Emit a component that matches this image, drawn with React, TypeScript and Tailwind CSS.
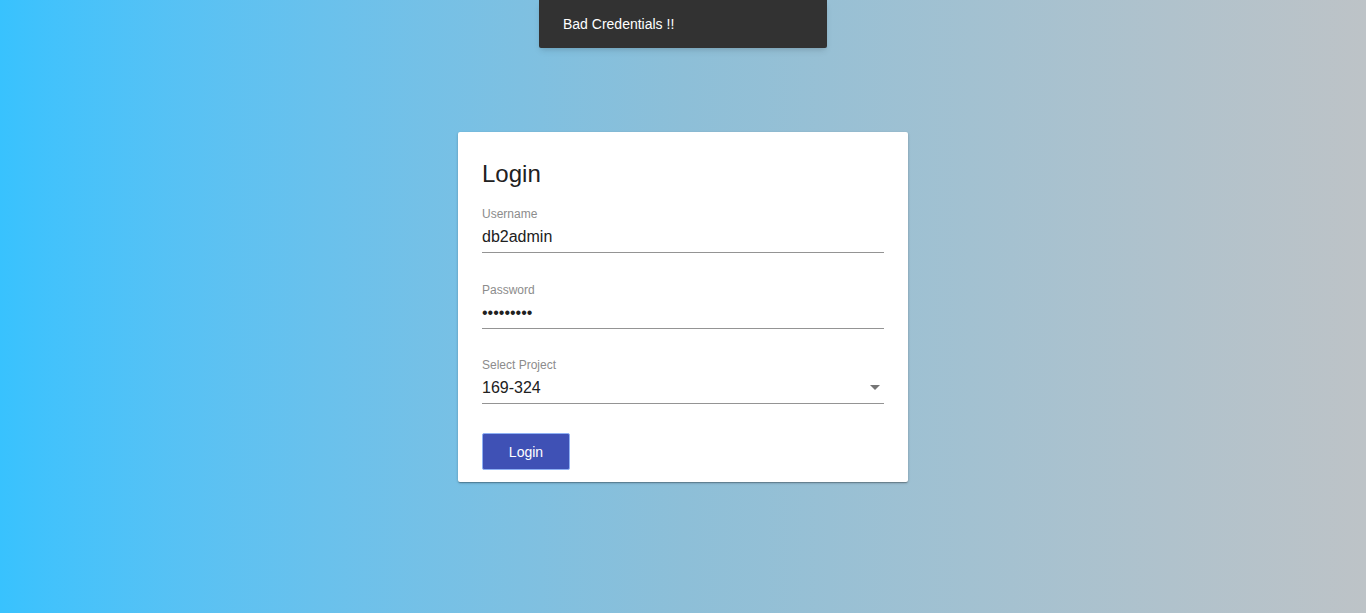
import React from 'react';

const FONT = { fontFamily: '"Liberation Sans", Arial, sans-serif' };

function Field({ label, value, select }: { label: string; value: string; select?: boolean }) {
  return (
    <div className="flex flex-col">
      <label className="text-[12px] leading-4 text-[#8c8c8c]">{label}</label>
      <div className="flex items-center justify-between pt-[5px] pb-[6px] border-b border-[#949494]">
        <span className="text-[16px] leading-[19px] text-[#212121]">{value}</span>
        {select && (
          <svg width="10" height="5" viewBox="0 0 10 5" className="mr-[4px]">
            <path d="M0 0h10L5 5z" fill="#757575" />
          </svg>
        )}
      </div>
    </div>
  );
}

export default function App() {
  return (
    <div
      className="relative w-full h-[613px] overflow-hidden bg-gradient-to-r from-[#38c2fe] via-[#8dbfd8] to-[#bdc3c7]"
      style={FONT}
    >
      {/* Snackbar */}
      <div className="absolute left-[539px] top-0 w-[288px] h-[48px] bg-[#323232] rounded-b-[2px] flex items-center px-6 shadow-md">
        <span className="text-white text-[14px] pt-[1px]">Bad Credentials !!</span>
      </div>

      <div className="flex justify-center pt-[132px]">
        <div className="w-[450px] h-[350px] bg-white rounded-[2px] px-6 pt-[25px] shadow-[0_1px_3px_rgba(0,0,0,0.2),0_1px_1px_rgba(0,0,0,0.14),0_2px_1px_-1px_rgba(0,0,0,0.12)]">
          <h1 className="text-[24px] leading-8 text-[#212121] pt-[1px] mb-[16px]">Login</h1>
          <Field label="Username" value="db2admin" />
          <div className="mt-[29px]">
            <Field label="Password" value="•••••••••" />
          </div>
          <div className="mt-[28px]">
            <Field label="Select Project" value="169-324" select />
          </div>
          <button className="mt-[29px] w-[88px] h-[37px] pt-[2px] bg-[#3f51b5] border border-[#8fb1f5] rounded-[2px] text-white text-[14px]">
            Login
          </button>
        </div>
      </div>
    </div>
  );
}
